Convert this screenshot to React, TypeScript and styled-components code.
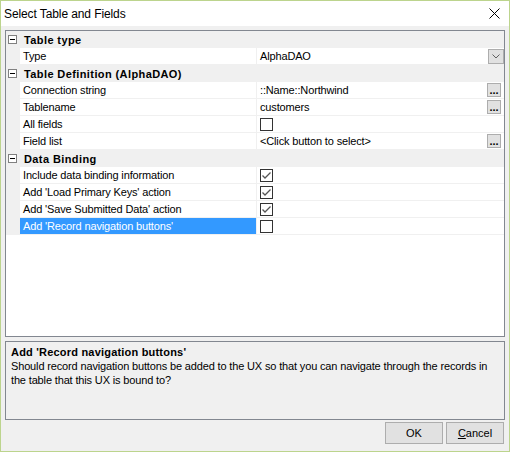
import React from "react";
import styled, { createGlobalStyle } from "styled-components";

const GlobalStyle = createGlobalStyle`
  html, body { margin: 0; padding: 0; }
  body { font-family: "Liberation Sans", Arial, sans-serif; font-size: 11px; color: #000; }
  * { box-sizing: border-box; }
`;

const Window = styled.div`
  width: 510px;
  height: 452px;
  border: 1px solid #bcd48d;
  background: #f0f0f0;
  display: flex;
  flex-direction: column;
`;

const TitleBar = styled.div`
  height: 25px;
  background: #fff;
  display: flex;
  align-items: center;
  justify-content: space-between;
  padding: 0 9px 0 3px;
`;

const Title = styled.span`
  font-size: 12px;
  letter-spacing: -0.1px;
  color: #000;
`;

const Body = styled.div`
  flex: 1;
  display: flex;
  flex-direction: column;
  padding: 4px 4px 0 4px;
`;

const Grid = styled.div`
  height: 307px;
  border: 1px solid #828790;
  background: #fff;
  display: flex;
  flex-direction: column;
`;

const CategoryRow = styled.div`
  height: 17px;
  background: #f0f0f0;
  display: flex;
  align-items: center;
`;

const Expander = styled.span`
  width: 9px;
  height: 9px;
  margin-left: 2px;
  border: 1px solid #808080;
  background: #fff;
  position: relative;
  &::after {
    content: "";
    position: absolute;
    left: 1px;
    top: 3px;
    width: 5px;
    height: 1px;
    background: #000;
  }
`;

const CategoryLabel = styled.span`
  margin-left: 7px;
  font-weight: bold;
  letter-spacing: 0.4px;
`;

const PropRow = styled.div`
  height: 17px;
  display: flex;
`;

const Gutter = styled.div`
  width: 14px;
  background: #f0f0f0;
`;

const Label = styled.div<{ $selected?: boolean }>`
  width: 236px;
  padding-left: 3px;
  border-bottom: 1px solid #f0f0f0;
  background: ${(p) => (p.$selected ? "#3399ff" : "#fff")};
  color: ${(p) => (p.$selected ? "#fff" : "#000")};
  display: flex;
  align-items: center;
  white-space: nowrap;
  letter-spacing: -0.15px;
`;

const Value = styled.div`
  flex: 1;
  padding-left: 3px;
  border-left: 1px solid #f0f0f0;
  border-bottom: 1px solid #f0f0f0;
  display: flex;
  align-items: center;
  justify-content: space-between;
  white-space: nowrap;
  letter-spacing: -0.15px;
`;

const ValueText = styled.span`
  padding-left: 0;
`;

const CellButton = styled.span`
  width: 16px;
  height: 15px;
  margin-right: 0px;
  background: #e1e1e1;
  border: 1px solid #adadad;
  display: flex;
  align-items: flex-end;
  justify-content: center;
  font-weight: bold;
  font-size: 11px;
  line-height: 11px;
  letter-spacing: 0;
`;

const DotsButton = styled(CellButton)`
  width: 14px;
  height: 14px;
  margin-right: 3px;
`;

const Check = styled.span`
  width: 13px;
  height: 13px;
  border: 1px solid #333;
  background: #fff;
  display: flex;
  align-items: center;
  justify-content: center;
`;

const Description = styled.div`
  margin-top: 4px;
  height: 79px;
  border: 1px solid #828790;
  background: #f0f0f0;
  padding: 3px 5px;
`;

const DescTitle = styled.div`
  font-weight: bold;
  letter-spacing: 0.2px;
  line-height: 14px;
`;

const DescText = styled.div`
  line-height: 14px;
  letter-spacing: -0.15px;
`;

const ButtonBar = styled.div`
  margin-top: 2px;
  display: flex;
  justify-content: flex-end;
  gap: 3px;
  padding-right: 1px;
`;

const DialogButton = styled.button`
  width: 58px;
  height: 22px;
  background: #e1e1e1;
  border: 1px solid #adadad;
  font-family: "Liberation Sans", Arial, sans-serif;
  font-size: 11px;
  color: #000;
  padding: 0;
  u { text-decoration: underline; }
`;

const CheckMark = () => (
  <svg width="11" height="11" viewBox="0 0 11 11">
    <path d="M1.5 5.5 L4 8 L9.5 2.5" fill="none" stroke="#555" strokeWidth="1.3" />
  </svg>
);

const CheckBox = ({ checked }: { checked?: boolean }) => <Check>{checked && <CheckMark />}</Check>;

const Chevron = () => (
  <svg width="8" height="5" viewBox="0 0 8 5" style={{ marginBottom: 4 }}>
    <path d="M0.5 0.5 L4 4 L7.5 0.5" fill="none" stroke="#606060" strokeWidth="1" />
  </svg>
);

const CloseIcon = () => (
  <svg width="11" height="11" viewBox="0 0 11 11">
    <path d="M0.5 0.5 L10.5 10.5 M10.5 0.5 L0.5 10.5" stroke="#000" strokeWidth="1" />
  </svg>
);

type Prop = {
  label: string;
  value?: React.ReactNode;
  selected?: boolean;
};

const Property = ({ label, value, selected }: Prop) => (
  <PropRow>
    <Gutter />
    <Label $selected={selected}>{label}</Label>
    <Value>{value}</Value>
  </PropRow>
);

const Category = ({ title }: { title: string }) => (
  <CategoryRow>
    <Expander />
    <CategoryLabel>{title}</CategoryLabel>
  </CategoryRow>
);

const Dots = () => <DotsButton>...</DotsButton>;

export default function App() {
  return (
    <>
      <GlobalStyle />
      <Window>
        <TitleBar>
          <Title>Select Table and Fields</Title>
          <CloseIcon />
        </TitleBar>
        <Body>
          <Grid>
            <Category title="Table type" />
            <Property
              label="Type"
              value={
                <>
                  <ValueText>AlphaDAO</ValueText>
                  <CellButton>
                    <Chevron />
                  </CellButton>
                </>
              }
            />
            <Category title="Table Definition (AlphaDAO)" />
            <Property
              label="Connection string"
              value={
                <>
                  <ValueText>::Name::Northwind</ValueText>
                  <Dots />
                </>
              }
            />
            <Property
              label="Tablename"
              value={
                <>
                  <ValueText>customers</ValueText>
                  <Dots />
                </>
              }
            />
            <Property label="All fields" value={<CheckBox />} />
            <Property
              label="Field list"
              value={
                <>
                  <ValueText>&lt;Click button to select&gt;</ValueText>
                  <Dots />
                </>
              }
            />
            <Category title="Data Binding" />
            <Property label="Include data binding information" value={<CheckBox checked />} />
            <Property label="Add 'Load Primary Keys' action" value={<CheckBox checked />} />
            <Property label="Add 'Save Submitted Data' action" value={<CheckBox checked />} />
            <Property label="Add 'Record navigation buttons'" value={<CheckBox />} selected />
          </Grid>
          <Description>
            <DescTitle>Add 'Record navigation buttons'</DescTitle>
            <DescText>
              Should record navigation buttons be added to the UX so that you can navigate through the records in
              the table that this UX is bound to?
            </DescText>
          </Description>
          <ButtonBar>
            <DialogButton>OK</DialogButton>
            <DialogButton>
              <u>C</u>ancel
            </DialogButton>
          </ButtonBar>
        </Body>
      </Window>
    </>
  );
}
